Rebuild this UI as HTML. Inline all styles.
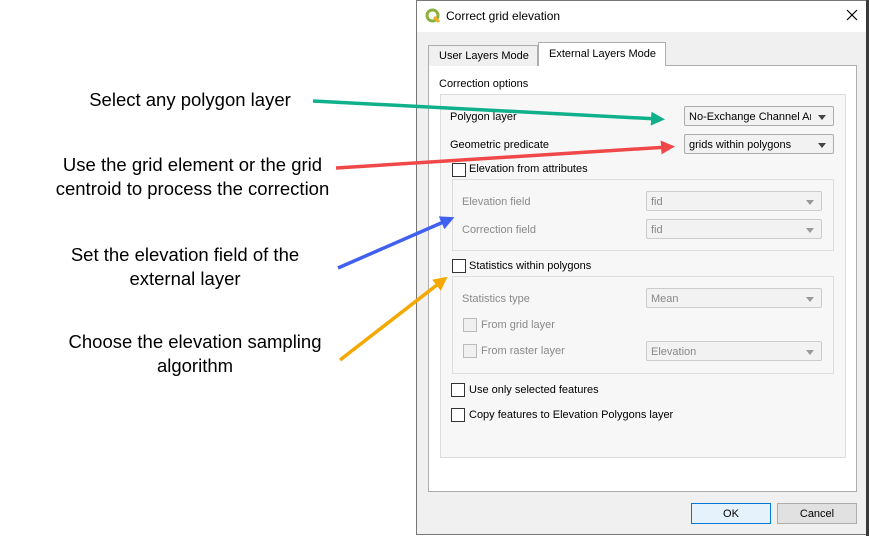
<!DOCTYPE html><html><head><style>
body{margin:0;width:869px;height:536px;background:#fff;position:relative;overflow:hidden;font-family:"Liberation Sans",Arial,sans-serif}
.a{position:absolute}
.lbl{position:absolute;font-size:18.5px;color:#000;text-align:center;line-height:24px}
.t{position:absolute;font-size:11px;color:#000;white-space:nowrap}
.g{color:#8a8a8a}
.cb{position:absolute;width:12px;height:12px;border:1px solid #333;background:#fff}
.cbg{border-color:#bbb;background:#f0f0f0}
.dd{position:absolute;height:20px;border:1px solid #adadad;border-radius:2px;background:#f2f2f2;font-size:11px;line-height:20px;padding-left:4px;box-sizing:border-box;white-space:nowrap}
.dd span{display:block;overflow:hidden;margin-right:22px}
.dd:after{content:"";position:absolute;right:7px;top:8px;border:4px solid transparent;border-top:5px solid #444;border-bottom:0}
.ddg{color:#888;border-color:#ccc}
.ddg:after{border-top-color:#999}
</style></head><body>
<div class="lbl" style="left:40px;top:88px;width:300px">Select any polygon layer</div>
<div class="lbl" style="left:20px;top:153px;width:345px">Use the grid element or the grid<br>centroid to process the correction</div>
<div class="lbl" style="left:30px;top:243px;width:310px">Set the elevation field of the<br>external layer</div>
<div class="lbl" style="left:30px;top:330px;width:330px">Choose the elevation sampling<br>algorithm</div>

<div class="a" style="left:416px;top:0;width:451px;height:535px;background:#f0f0f0;border:1px solid #777;box-sizing:border-box"></div>
<div class="a" style="left:866px;top:0;width:3px;height:536px;background:#3a3a3a"></div>
<div class="a" style="left:417px;top:1px;width:449px;height:31px;background:#fff"></div>
<svg class="a" style="left:425px;top:8px" width="16" height="16" viewBox="0 0 16 16"><circle cx="7.5" cy="7.5" r="5.5" fill="none" stroke="#8bb040" stroke-width="3"/><path d="M9 9l5 5" stroke="#f0b020" stroke-width="3"/></svg>
<div class="t" style="left:446px;top:9px;font-size:12px">Correct grid elevation</div>
<svg class="a" style="left:846px;top:9px" width="12" height="12"><path d="M1 1l10 10M11 1L1 11" stroke="#000" stroke-width="1.2"/></svg>

<div class="a" style="left:428px;top:65px;width:429px;height:427px;background:#fff;border:1px solid #adadad;box-sizing:border-box"></div>
<div class="a" style="left:428px;top:45px;width:110px;height:21px;background:#f0f0f0;border:1px solid #adadad;border-bottom:0;box-sizing:border-box"></div>
<div class="t" style="left:439px;top:50px">User Layers Mode</div>
<div class="a" style="left:538px;top:42px;width:128px;height:24px;background:#fff;border:1px solid #adadad;border-bottom:0;box-sizing:border-box"></div>
<div class="t" style="left:549px;top:48px">External Layers Mode</div>
<div class="t" style="left:439px;top:78px">Correction options</div>
<div class="a" style="left:440px;top:94px;width:406px;height:364px;background:#f7f7f7;border:1px solid #ddd;box-sizing:border-box"></div>
<div class="t" style="left:450px;top:111px">Polygon layer</div>
<div class="dd" style="left:684px;top:106px;width:150px"><span>No-Exchange Channel Area</span></div>
<div class="t" style="left:450px;top:139px">Geometric predicate</div>
<div class="dd" style="left:684px;top:134px;width:150px"><span>grids within polygons</span></div>
<div class="cb" style="left:452px;top:163px"></div>
<div class="t" style="left:469px;top:163px">Elevation from attributes</div>
<div class="a" style="left:452px;top:179px;width:382px;height:72px;border:1px solid #ddd;box-sizing:border-box"></div>
<div class="t g" style="left:462px;top:196px">Elevation field</div>
<div class="dd ddg" style="left:646px;top:191px;width:176px"><span>fid</span></div>
<div class="t g" style="left:462px;top:224px">Correction field</div>
<div class="dd ddg" style="left:646px;top:219px;width:176px"><span>fid</span></div>
<div class="cb" style="left:452px;top:259px"></div>
<div class="t" style="left:469px;top:260px">Statistics within polygons</div>
<div class="a" style="left:452px;top:276px;width:382px;height:98px;border:1px solid #ddd;box-sizing:border-box"></div>
<div class="t g" style="left:462px;top:293px">Statistics type</div>
<div class="dd ddg" style="left:646px;top:288px;width:176px"><span>Mean</span></div>
<div class="cb cbg" style="left:463px;top:318px"></div>
<div class="t g" style="left:481px;top:319px">From grid layer</div>
<div class="cb cbg" style="left:463px;top:344px"></div>
<div class="t g" style="left:481px;top:345px">From raster layer</div>
<div class="dd ddg" style="left:646px;top:341px;width:176px"><span>Elevation</span></div>
<div class="cb" style="left:451px;top:383px"></div>
<div class="t" style="left:469px;top:384px">Use only selected features</div>
<div class="cb" style="left:451px;top:408px"></div>
<div class="t" style="left:469px;top:409px">Copy features to Elevation Polygons layer</div>

<div class="a" style="left:691px;top:503px;width:80px;height:21px;border:1px solid #0078d7;background:#e5f1fb;box-sizing:border-box;font-size:11px;text-align:center;line-height:20px">OK</div>
<div class="a" style="left:777px;top:503px;width:80px;height:21px;border:1px solid #adadad;background:#e1e1e1;box-sizing:border-box;font-size:11px;text-align:center;line-height:20px">Cancel</div>

<svg class="a" style="left:0;top:0" width="869" height="536">
<defs>
<marker id="mg" markerWidth="4" markerHeight="4" refX="2" refY="2" orient="auto"><path d="M0 0L4 2L0 4z" fill="#10b08a"/></marker>
<marker id="mr" markerWidth="4" markerHeight="4" refX="2" refY="2" orient="auto"><path d="M0 0L4 2L0 4z" fill="#f04848"/></marker>
<marker id="mb" markerWidth="4" markerHeight="4" refX="2" refY="2" orient="auto"><path d="M0 0L4 2L0 4z" fill="#4060f0"/></marker>
<marker id="mo" markerWidth="4" markerHeight="4" refX="2" refY="2" orient="auto"><path d="M0 0L4 2L0 4z" fill="#f5a800"/></marker>
</defs>
<line x1="313" y1="101" x2="658" y2="119" stroke="#10b08a" stroke-width="3.5" marker-end="url(#mg)"/>
<line x1="336" y1="168" x2="668" y2="147" stroke="#f04848" stroke-width="3.5" marker-end="url(#mr)"/>
<line x1="338" y1="268" x2="448" y2="220" stroke="#4060f0" stroke-width="3.5" marker-end="url(#mb)"/>
<line x1="340" y1="360" x2="442" y2="281" stroke="#f5a800" stroke-width="3.5" marker-end="url(#mo)"/>
</svg>
</body></html>
